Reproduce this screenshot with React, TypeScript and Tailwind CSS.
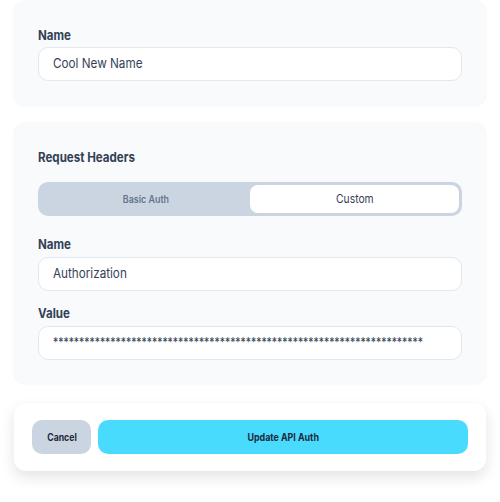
import React from "react";

function L({ children, s }: { children: React.ReactNode; s: string }) {
  return <span className={`inline-block whitespace-nowrap origin-left ${s}`}>{children}</span>;
}

export default function App() {
  const stars = "*".repeat(71);
  return (
    <div className="w-[500px] h-[502px] bg-white pt-px px-[14px] flex flex-col" style={{ fontFamily: "Inter, 'Noto Sans', sans-serif" }}>
      <div className="rounded-xl bg-[#f8fafc] shadow-[0_0_2px_rgba(15,23,42,0.08)] px-6 pt-6 pb-[25px]">
        <div className="text-[13px] font-bold leading-5 text-[#334155] mb-[2px]"><L s="scale-x-[0.89]">Name</L></div>
        <div className="h-[34px] rounded-[10px] border border-[#e2e8f0] bg-white px-[14px] flex items-center text-[13px] text-[#334155]"><L s="scale-x-[0.9]">Cool New Name</L></div>
      </div>

      <div className="mt-[17px] rounded-xl bg-[#f8fafc] shadow-[0_0_2px_rgba(15,23,42,0.08)] p-6">
        <div className="text-[13px] font-bold leading-5 text-[#334155] mb-[15px]"><L s="scale-x-[0.89]">Request Headers</L></div>
        <div className="h-[34px] rounded-[10px] bg-[#cbd5e1] p-[3px] flex">
          <div className="flex-1 flex items-center justify-center text-[10px] font-semibold text-[#64748b]"><span className="inline-block scale-x-[0.89]">Basic Auth</span></div>
          <div className="flex-1 flex items-center justify-center rounded-lg bg-white text-[12px] text-[#334155]"><span className="inline-block scale-x-[0.86]">Custom</span></div>
        </div>
        <div className="mt-[18px] text-[13px] font-bold leading-5 text-[#334155] mb-[3px]"><L s="scale-x-[0.89]">Name</L></div>
        <div className="h-[34px] rounded-[10px] border border-[#e2e8f0] bg-white px-[14px] flex items-center text-[13px] text-[#334155]"><L s="scale-x-[0.9]">Authorization</L></div>
        <div className="mt-[12px] text-[13px] font-bold leading-5 text-[#334155] mb-[3px]"><L s="scale-x-[0.89]">Value</L></div>
        <div className="h-[34px] rounded-[10px] border border-[#e2e8f0] bg-white px-[14px] flex items-center text-[13px] text-[#334155] overflow-hidden"><L s="scale-x-[0.8]">{stars}</L></div>
      </div>

      <div className="mt-[19px] rounded-xl bg-white shadow-[0_6px_14px_rgba(15,23,42,0.12)] px-[18px] py-[17px] flex gap-[7px]">
        <button className="h-[34px] w-[59px] rounded-[10px] bg-[#cbd5e1] text-[10px] font-bold text-[#1e293b]"><span className="inline-block scale-x-[0.87]">Cancel</span></button>
        <button className="h-[34px] flex-1 rounded-[10px] bg-[#48dbfe] text-[10px] font-bold text-[#1e293b]"><span className="inline-block scale-x-[0.89]">Update API Auth</span></button>
      </div>
    </div>
  );
}
